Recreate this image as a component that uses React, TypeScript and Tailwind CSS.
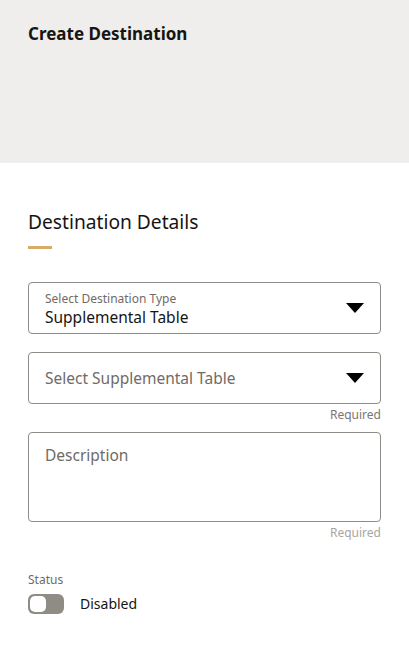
import React from "react";

function Caret() {
  return (
    <svg width="18" height="10" viewBox="0 0 18 10" className="shrink-0">
      <path d="M0 0 L18 0 L9 10 Z" fill="#000" />
    </svg>
  );
}

export default function App() {
  return (
    <div className="w-[409px] h-[649px] bg-white text-[#161513]" style={{ fontFamily: '"Noto Sans", "Open Sans", sans-serif' }}>
      <div className="h-[163px] bg-[#f0eeec] px-[28px] pt-[22px]">
        <h1 className="text-[17px] font-bold leading-[24px]">Create Destination</h1>
      </div>
      <div className="px-[28px] pt-[45px]">
        <h2 className="text-[19.2px] leading-[28px] font-normal">Destination Details</h2>
        <div className="mt-[10px] w-[24px] h-[3px] bg-[#d8ac68]" />

        <div className="mt-[33px] h-[52px] rounded-[4px] border border-[#8f8b87] flex items-center pl-[16px] pr-[16px]">
          <div className="flex-1 flex flex-col pt-[2px]">
            <span className="text-[12px] leading-[16px] text-[#6f6b67]">Select Destination Type</span>
            <span className="text-[15.5px] leading-[20px]">Supplemental Table</span>
          </div>
          <Caret />
        </div>

        <div className="mt-[18px] h-[52px] rounded-[4px] border border-[#8f8b87] flex items-center pl-[16px] pr-[16px]">
          <span className="flex-1 text-[15.5px] leading-[20px] text-[#6f6b67]">Select Supplemental Table</span>
          <Caret />
        </div>
        <div className="text-right text-[12px] leading-[16px] text-[#7a7672] mt-[3px]">Required</div>

        <div className="mt-[9px] h-[90px] rounded-[4px] border border-[#8f8b87] pl-[16px] pt-[10px]">
          <span className="text-[15.5px] leading-[20px] text-[#6f6b67]">Description</span>
        </div>
        <div className="text-right text-[12px] leading-[16px] text-[#a9a5a1] mt-[3px]">Required</div>

        <div className="mt-[31px] text-[12px] leading-[16px] text-[#6f6b67]">Status</div>
        <div className="mt-[6px] flex items-center">
          <div className="w-[36px] h-[20px] rounded-[6px] bg-[#8f8b85] p-[2px] flex items-center">
            <div className="w-[16px] h-[16px] rounded-[5px] bg-white" />
          </div>
          <span className="ml-[16px] text-[14px] leading-[20px]">Disabled</span>
        </div>
      </div>
    </div>
  );
}
